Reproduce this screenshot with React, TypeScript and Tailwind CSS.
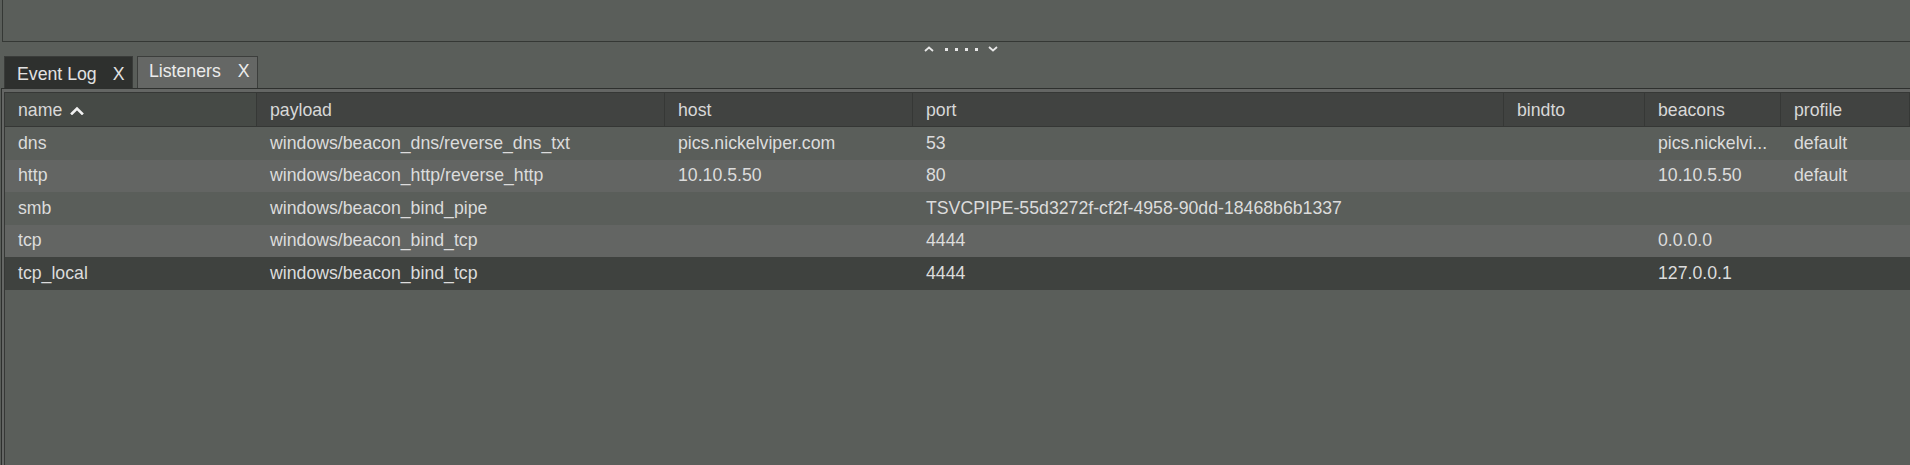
import React from "react";

const cols = [
  { key: "name", label: "name", w: "w-[252px]" },
  { key: "payload", label: "payload", w: "w-[408px]" },
  { key: "host", label: "host", w: "w-[248px]" },
  { key: "port", label: "port", w: "w-[591px]" },
  { key: "bindto", label: "bindto", w: "w-[141px]" },
  { key: "beacons", label: "beacons", w: "w-[136px]" },
  { key: "profile", label: "profile", w: "flex-1" },
];

type Row = { [k: string]: string };

const rows: { data: Row; bg: string }[] = [
  {
    data: {
      name: "dns",
      payload: "windows/beacon_dns/reverse_dns_txt",
      host: "pics.nickelviper.com",
      port: "53",
      bindto: "",
      beacons: "pics.nickelvi...",
      profile: "default",
    },
    bg: "bg-[#5a5e5a]",
  },
  {
    data: {
      name: "http",
      payload: "windows/beacon_http/reverse_http",
      host: "10.10.5.50",
      port: "80",
      bindto: "",
      beacons: "10.10.5.50",
      profile: "default",
    },
    bg: "bg-[#636563]",
  },
  {
    data: {
      name: "smb",
      payload: "windows/beacon_bind_pipe",
      host: "",
      port: "TSVCPIPE-55d3272f-cf2f-4958-90dd-18468b6b1337",
      bindto: "",
      beacons: "",
      profile: "",
    },
    bg: "bg-[#5a5e5a]",
  },
  {
    data: {
      name: "tcp",
      payload: "windows/beacon_bind_tcp",
      host: "",
      port: "4444",
      bindto: "",
      beacons: "0.0.0.0",
      profile: "",
    },
    bg: "bg-[#636563]",
  },
  {
    data: {
      name: "tcp_local",
      payload: "windows/beacon_bind_tcp",
      host: "",
      port: "4444",
      bindto: "",
      beacons: "127.0.0.1",
      profile: "",
    },
    bg: "bg-[#3f423f]",
  },
];

function SortUp() {
  return (
    <svg width="14" height="9" viewBox="0 0 14 9" className="ml-[8px]">
      <polyline points="2,7.5 7,2.5 12,7.5" fill="none" stroke="#f2f2f2" strokeWidth="2.6" strokeLinecap="square" />
    </svg>
  );
}

function Splitter() {
  return (
    <div className="h-[14px] flex items-center justify-center">
      <div className="flex items-center ml-[12px]">
        <svg width="12" height="8" viewBox="0 0 12 8">
          <polyline points="2,6 6,2.5 10,6" fill="none" stroke="#e8e8e8" strokeWidth="1.8" />
        </svg>
        <div className="flex items-center gap-[7px] ml-[10px] mr-[9px]">
          <div className="w-[3px] h-[3px] bg-[#e8e8e8]" />
          <div className="w-[3px] h-[3px] bg-[#e8e8e8]" />
          <div className="w-[3px] h-[3px] bg-[#e8e8e8]" />
          <div className="w-[3px] h-[3px] bg-[#e8e8e8]" />
        </div>
        <svg width="12" height="8" viewBox="0 0 12 8">
          <polyline points="2,2 6,5.5 10,2" fill="none" stroke="#e8e8e8" strokeWidth="1.8" />
        </svg>
      </div>
    </div>
  );
}

export default function App() {
  return (
    <div
      className="h-[465px] w-full overflow-hidden bg-[#5a5e5a] flex flex-col text-[17.7px] leading-none text-[#dcdcdc]"
      style={{ fontFamily: "'Liberation Sans', Arial, sans-serif" }}
    >
      {/* top panel */}
      <div className="h-[42px] shrink-0 ml-[2px] border-l border-b border-[#353835] bg-[#5a5e5a]" />

      <Splitter />

      {/* tabs */}
      <div className="h-[32px] shrink-0 flex items-stretch pl-[4px] gap-[4px]">
        <div className="w-[129px] bg-[#2e302e] border-t border-l border-r border-[#3a3c3a] flex items-center pl-[12px] pt-[4px]">
          <span className="text-[#e2e2e2]">Event Log</span>
          <span className="ml-[16px] text-[#e2e2e2]">X</span>
        </div>
        <div className="w-[121px] bg-[#656765] border-t border-l border-r border-[#3c3e3c] flex items-center pl-[11px] pb-[1px]">
          <span className="text-[#ececec]">Listeners</span>
          <span className="ml-[17px] text-[#ececec]">X</span>
        </div>
      </div>

      {/* content panel */}
      <div className="flex-1 ml-[1px] border-l border-t border-[#2e302e] flex flex-col">
        <div className="flex-1 border-l-[2px] border-t-[3px] border-[#646664] flex flex-col">
          <div className="flex-1 border-l border-t border-[#363836] flex flex-col bg-[#5a5e5a]">
            {/* header */}
            <div className="h-[34px] shrink-0 flex border-b border-[#353735] bg-[#414341] text-[#d8d8d8]">
              {cols.map((c, i) => (
                <div
                  key={c.key}
                  className={`${c.w} shrink-0 h-full flex items-center pl-[13px] pt-[2px] border-r border-[#363836] ${i === 0 ? "bg-[#464a46]" : ""}`}
                >
                  <span>{c.label}</span>
                  {i === 0 && <SortUp />}
                </div>
              ))}
            </div>
            {/* rows */}
            {rows.map((r, ri) => (
              <div key={ri} className={`h-[32.5px] shrink-0 flex ${r.bg}`}>
                {cols.map((c) => (
                  <div
                    key={c.key}
                    className={`${c.w} shrink-0 h-full flex items-center pl-[13px] pt-[1px] border-r border-transparent overflow-hidden whitespace-nowrap`}
                  >
                    <span>{r.data[c.key]}</span>
                  </div>
                ))}
              </div>
            ))}
          </div>
        </div>
      </div>
    </div>
  );
}
